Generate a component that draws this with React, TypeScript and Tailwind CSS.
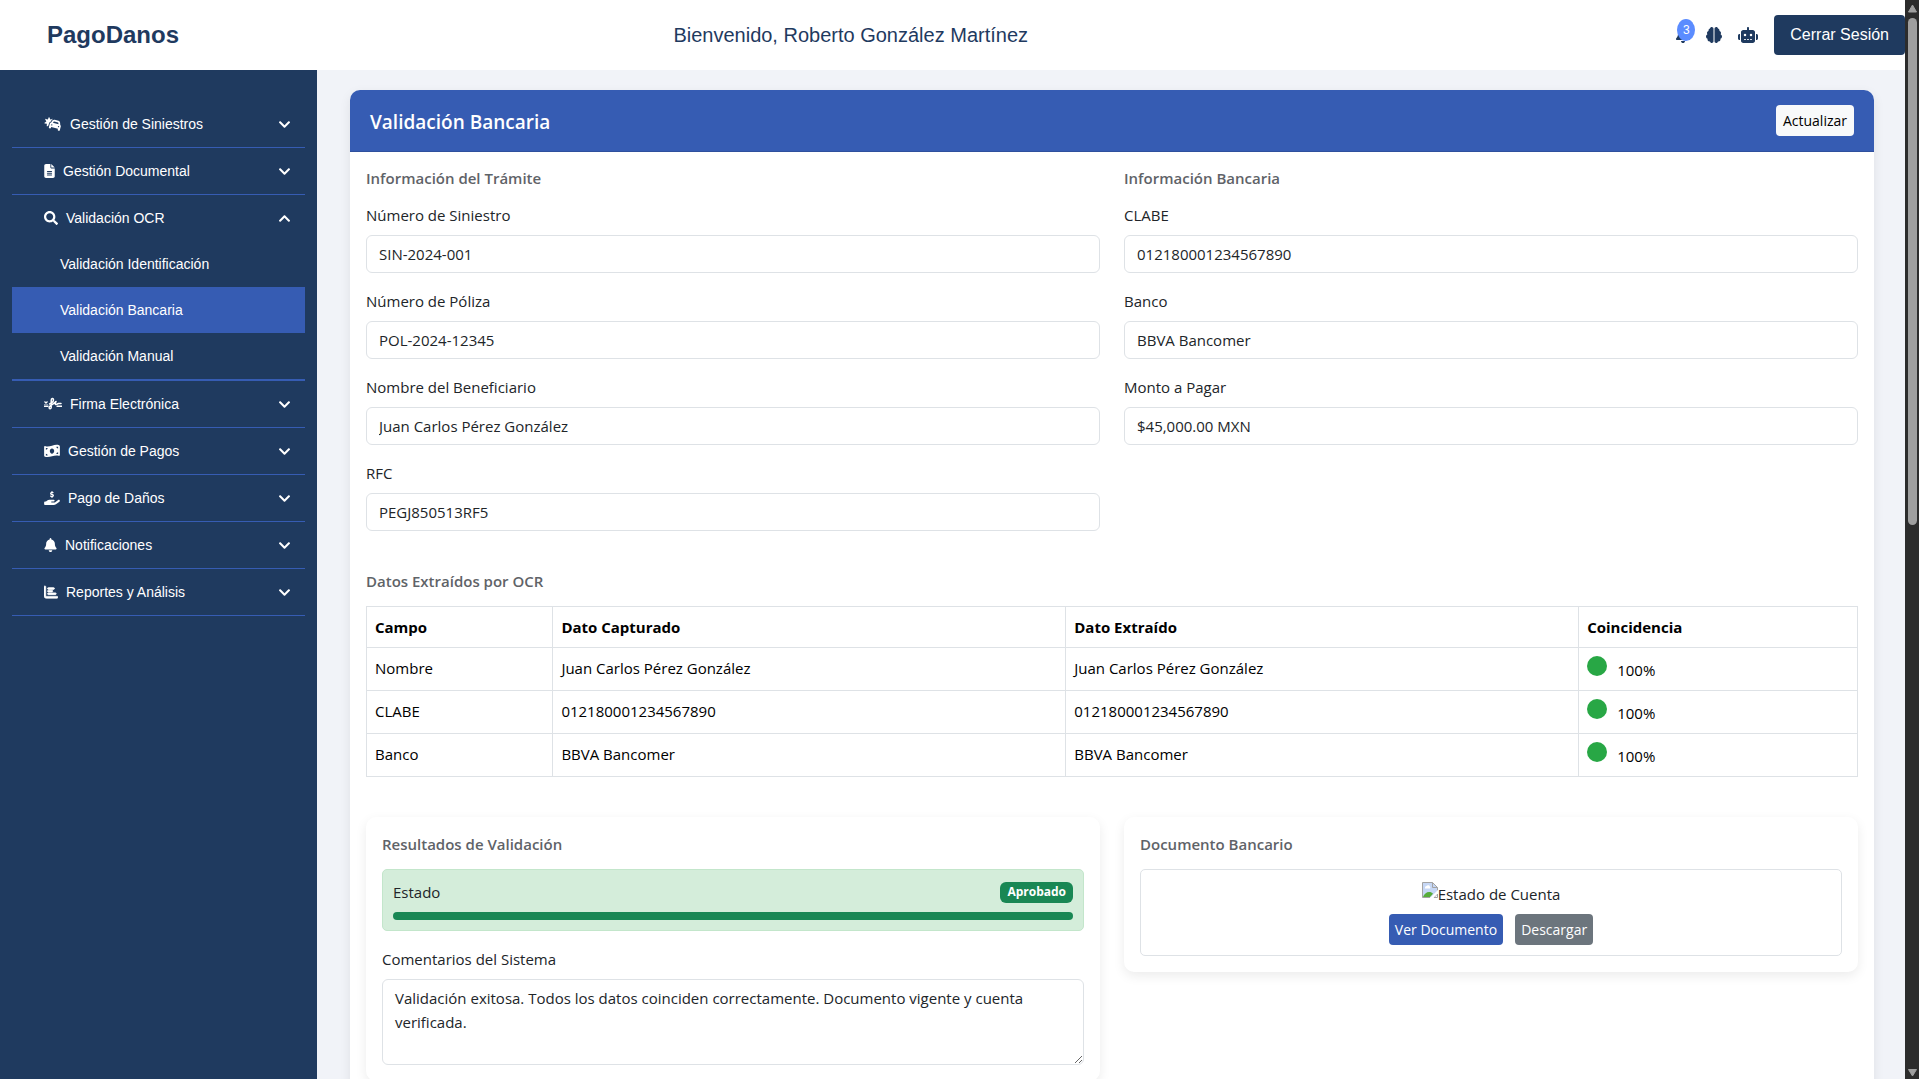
import type { ReactNode } from "react";
import type { IconType } from "react-icons";
import { FaChevronDown, FaChevronUp, FaSearch } from "react-icons/fa";
import {
  FaBell,
  FaBrain,
  FaCarBurst,
  FaChartBar,
  FaFileLines,
  FaHandHoldingDollar,
  FaMoneyBillWave,
  FaRobot,
} from "react-icons/fa6";

type MenuItem = {
  label: string;
  icon: IconType;
  iconClass: string;
  children?: { label: string; active?: boolean }[];
};

function SignatureIcon({ className }: { className?: string }) {
  return (
    <svg viewBox="0 0 18 14" className={className} fill="none" stroke="currentColor" aria-hidden="true">
      <path d="M.5 4.500 3.500 7.500M3.500 4.500.5 7.500" strokeWidth="1.200" />
      <path d="M0 9.300H4.500M12.500 9.300H18" strokeWidth="1.500" />
      <path
        d="M5.500 7C8 6 9.500 4.500 9.500 2.800 9.500.8 7.200 1 7.200 3.500V10.200C7.200 12.300 4.800 12.200 5.200 10.200 5.600 8.200 10.500 6.800 12 4.500 10.800 6.500 11 8.200 12.800 7.200L14.500 6.500H17"
        strokeWidth="1.500"
        strokeLinecap="round"
        strokeLinejoin="round"
      />
    </svg>
  );
}

const menu: MenuItem[] = [
  { label: "Gestión de Siniestros", icon: FaCarBurst, iconClass: "w-[18px]" },
  { label: "Gestión Documental", icon: FaFileLines, iconClass: "w-[11px]" },
  {
    label: "Validación OCR",
    icon: FaSearch,
    iconClass: "w-[14px]",
    children: [
      { label: "Validación Identificación" },
      { label: "Validación Bancaria", active: true },
      { label: "Validación Manual" },
    ],
  },
  { label: "Firma Electrónica", icon: SignatureIcon, iconClass: "w-[18px]" },
  { label: "Gestión de Pagos", icon: FaMoneyBillWave, iconClass: "w-[16px]" },
  { label: "Pago de Daños", icon: FaHandHoldingDollar, iconClass: "w-[16px]" },
  { label: "Notificaciones", icon: FaBell, iconClass: "w-[13px]" },
  { label: "Reportes y Análisis", icon: FaChartBar, iconClass: "w-[14px] stroke-[28]" },
];

const tramite = [
  { id: "siniestro", label: "Número de Siniestro", value: "SIN-2024-001" },
  { id: "poliza", label: "Número de Póliza", value: "POL-2024-12345" },
  { id: "beneficiario", label: "Nombre del Beneficiario", value: "Juan Carlos Pérez González" },
  { id: "rfc", label: "RFC", value: "PEGJ850513RF5" },
];

const bancaria = [
  { id: "clabe", label: "CLABE", value: "012180001234567890" },
  { id: "banco", label: "Banco", value: "BBVA Bancomer" },
  { id: "monto", label: "Monto a Pagar", value: "$45,000.00 MXN" },
];

const ocrRows = [
  { campo: "Nombre", capturado: "Juan Carlos Pérez González", extraido: "Juan Carlos Pérez González", match: "100%" },
  { campo: "CLABE", capturado: "012180001234567890", extraido: "012180001234567890", match: "100%" },
  { campo: "Banco", capturado: "BBVA Bancomer", extraido: "BBVA Bancomer", match: "100%" },
];

function TopBar() {
  return (
    <header className="flex h-[70px] shrink-0 items-center bg-white font-['Liberation_Sans',Arial,sans-serif] text-[#1f3a5f]">
      <div className="flex-[5] pl-[47px] text-2xl font-bold">PagoDanos</div>
      <div className="text-xl">Bienvenido, Roberto González Martínez</div>
      <div className="flex flex-[7] items-center justify-end gap-4">
        <button type="button" aria-label="Notificaciones" className="relative">
          <FaBell className="h-4 w-[14px]" />
          <span className="absolute -top-2 left-px flex h-[22px] w-[18px] items-center justify-center rounded-[50%] bg-[#5b8cff] text-xs text-white">
            3
          </span>
        </button>
        <button type="button" aria-label="Análisis inteligente">
          <FaBrain className="size-4" />
        </button>
        <button type="button" aria-label="Asistente">
          <FaRobot className="h-4 w-5" />
        </button>
        <button type="button" className="h-10 rounded bg-[#1f3a5f] px-4 text-base text-white">
          Cerrar Sesión
        </button>
      </div>
    </header>
  );
}

function Sidebar() {
  return (
    <nav className="w-[317px] shrink-0 bg-[#1f3a5f] px-3 pt-[31px] font-['Liberation_Sans',Arial,sans-serif] text-sm text-white">
      <ul>
        {menu.map(({ label, icon: Icon, iconClass, children }) => (
          <li key={label} className="border-b border-[#365cb3]">
            <button
              type="button"
              aria-expanded={Boolean(children)}
              className="flex h-[46px] w-full items-center gap-2 pl-8 pr-[14px] text-left"
            >
              <Icon className={`h-[14px] shrink-0 ${iconClass}`} />
              <span className="flex-1">{label}</span>
              {children ? <FaChevronUp className="size-[13px]" /> : <FaChevronDown className="size-[13px]" />}
            </button>
            {children && (
              <ul className="border-b border-[#365cb3]">
                {children.map((child) => (
                  <li key={child.label}>
                    <a
                      href="#"
                      className={
                        child.active
                          ? "flex h-[46px] items-center bg-[#365cb3] pl-12"
                          : "flex h-[46px] items-center pl-12"
                      }
                    >
                      {child.label}
                    </a>
                  </li>
                ))}
              </ul>
            )}
          </li>
        ))}
      </ul>
    </nav>
  );
}

function SectionTitle({ children }: { children: ReactNode }) {
  return <h2 className="mb-[15px] text-[15px] leading-5 font-semibold text-[#5f6368]">{children}</h2>;
}

function Field({ id, label, value }: { id: string; label: string; value: string }) {
  return (
    <div className="mb-4">
      <label htmlFor={id} className="mb-2 block">
        {label}
      </label>
      <input
        id={id}
        readOnly
        defaultValue={value}
        className="block h-[38px] w-full rounded-md border border-[#dee2e6] bg-white px-3"
      />
    </div>
  );
}

function OcrTable() {
  return (
    <table className="w-full table-fixed border-collapse text-black">
      <thead>
        <tr className="h-[41px] text-left">
          <th className="w-[12.5%] border border-[#dee2e6] px-2 font-bold">Campo</th>
          <th className="w-[34.4%] border border-[#dee2e6] px-2 font-bold">Dato Capturado</th>
          <th className="w-[34.4%] border border-[#dee2e6] px-2 font-bold">Dato Extraído</th>
          <th className="border border-[#dee2e6] px-2 font-bold">Coincidencia</th>
        </tr>
      </thead>
      <tbody className="align-top">
        {ocrRows.map((row) => (
          <tr key={row.campo} className="h-[43px]">
            <td className="border border-[#dee2e6] px-2 pt-2">{row.campo}</td>
            <td className="border border-[#dee2e6] px-2 pt-2">{row.capturado}</td>
            <td className="border border-[#dee2e6] px-2 pt-2">{row.extraido}</td>
            <td className="border border-[#dee2e6] px-2 pt-2">
              <div className="flex gap-[10px]">
                <span className="size-5 rounded-full bg-[#28a745]" />
                <span className="pt-1 leading-5">{row.match}</span>
              </div>
            </td>
          </tr>
        ))}
      </tbody>
    </table>
  );
}

function BrokenImage() {
  return (
    <svg viewBox="0 0 16 16" className="mt-0.5 size-4" aria-hidden="true">
      <path d="M0.5 0.5H10.5L15.5 5.5V9L9 15.5H0.5Z" fill="#c6d7f5" />
      <path d="M3 5.5a1.5 1.5 0 0 1 1.5-1.5 2 2 0 0 1 3.5 1 1 1 0 0 1 0 1.5H3Z" fill="#fff" />
      <path d="M1 15c1-3 3.5-5 6-5 2 0 3 .7 4 1.7L8 15Z" fill="#57ad3a" />
      <path d="M15.5 5.5V8.5M.5 15.5V.5H10.5L15.5 5.5H10.5V.5M.5 15.5H8M12 15.5H15.5V12Z" fill="none" stroke="#a3a3a3" />
      <path d="M16 8 8 16h3l5-5Z" fill="#fff" />
    </svg>
  );
}

function Results() {
  return (
    <section className="rounded-[10px] bg-white px-4 pt-[17px] pb-4 shadow-[0_4px_12px_rgba(0,0,0,0.08)]">
      <SectionTitle>Resultados de Validación</SectionTitle>
      <div className="mb-4 rounded-[5px] border border-[#c3e6cb] bg-[#d4edda] p-[10px]">
        <div className="mb-2 flex h-6 items-center justify-between">
          <span>Estado</span>
          <span className="flex h-[21px] items-center rounded-md bg-[#198754] px-[7px] text-xs font-bold text-white">
            Aprobado
          </span>
        </div>
        <div
          role="progressbar"
          aria-label="Estado"
          aria-valuenow={100}
          className="h-2 rounded-full bg-[#198754]"
        />
      </div>
      <label htmlFor="comentarios" className="mb-2 block">
        Comentarios del Sistema
      </label>
      <textarea
        id="comentarios"
        rows={3}
        readOnly
        className="block h-[86px] w-full resize-y rounded-md border border-[#dee2e6] bg-white px-3 py-[6px]"
        defaultValue="Validación exitosa. Todos los datos coinciden correctamente. Documento vigente y cuenta verificada."
      />
    </section>
  );
}

function BankDocument() {
  return (
    <section className="rounded-[10px] bg-white px-4 pt-[17px] pb-4 shadow-[0_4px_12px_rgba(0,0,0,0.08)]">
      <SectionTitle>Documento Bancario</SectionTitle>
      <div className="rounded-[5px] border border-[#dee2e6] p-[10px]">
        <div className="mb-[10px] flex h-6 justify-center">
          <BrokenImage />
          <span className="pt-0.5">Estado de Cuenta</span>
        </div>
        <div className="flex justify-center gap-3">
          <button type="button" className="h-[31px] rounded bg-[#365cb3] px-[6px] pt-px text-sm text-white">
            Ver Documento
          </button>
          <button type="button" className="h-[31px] rounded bg-[#6c757d] px-[6px] pt-px text-sm text-white">
            Descargar
          </button>
        </div>
      </div>
    </section>
  );
}

function Scrollbar() {
  return (
    <div aria-hidden="true" className="flex w-[14px] shrink-0 flex-col items-center bg-[#2c2c2c]">
      <svg viewBox="0 0 14 18" className="h-[18px] w-[14px]">
        <path d="M7.5 5 11.5 12H3.5Z" fill="#9f9f9f" stroke="#9f9f9f" strokeLinejoin="round" />
      </svg>
      <div className="h-[47%] w-[9px] rounded-full bg-[#9f9f9f]" />
      <svg viewBox="0 0 14 18" className="mt-auto h-[18px] w-[14px]">
        <path d="M3.5 8.5H11.5L7.5 15Z" fill="#9f9f9f" stroke="#9f9f9f" strokeLinejoin="round" />
      </svg>
    </div>
  );
}

export default function App() {
  return (
    <div className="flex h-screen overflow-hidden bg-[#f1f3f8]">
      <div className="flex min-w-0 flex-1 flex-col">
        <TopBar />
        <div className="flex min-h-0 flex-1">
          <Sidebar />
          <main className="min-w-0 flex-1 overflow-hidden pt-5 pr-[31px] pl-[33px] font-['Open_Sans','Noto_Sans',sans-serif] text-[15px] leading-6 text-[#212529]">
            <div className="rounded-[10px] bg-white pb-10 shadow-[0_4px_12px_rgba(0,0,0,0.08)]">
              <div className="flex h-[62px] items-center justify-between rounded-t-[10px] border-b border-[#2f509d] bg-[#365cb3] px-5">
                <h1 className="pt-0.5 text-[19px] font-semibold text-white">Validación Bancaria</h1>
                <button type="button" className="h-[31px] rounded bg-[#f8f9fa] px-[7px] pt-px text-sm text-black">
                  Actualizar
                </button>
              </div>
              <div className="p-4">
                <div className="mb-6 grid grid-cols-2 gap-6">
                  <section>
                    <SectionTitle>Información del Trámite</SectionTitle>
                    {tramite.map((f) => (
                      <Field key={f.id} {...f} />
                    ))}
                  </section>
                  <section>
                    <SectionTitle>Información Bancaria</SectionTitle>
                    {bancaria.map((f) => (
                      <Field key={f.id} {...f} />
                    ))}
                  </section>
                </div>
                <SectionTitle>Datos Extraídos por OCR</SectionTitle>
                <OcrTable />
                <div className="mt-10 grid grid-cols-2 items-start gap-6">
                  <Results />
                  <BankDocument />
                </div>
              </div>
            </div>
          </main>
        </div>
      </div>
      <Scrollbar />
    </div>
  );
}
